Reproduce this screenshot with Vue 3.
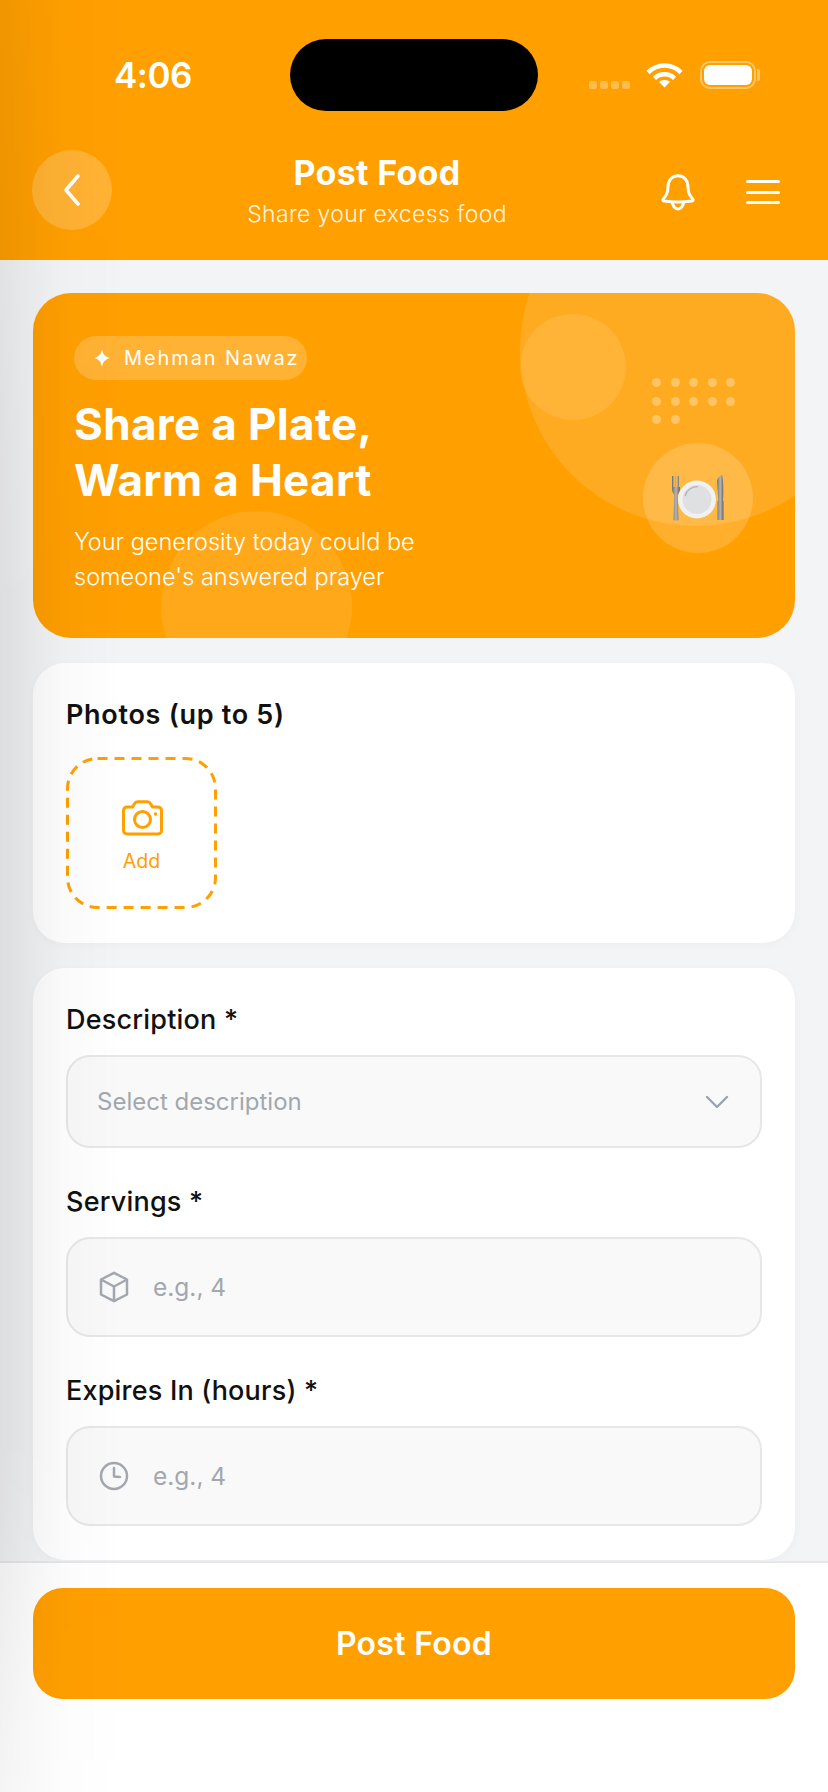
<template>
  <div class="page">
    <header class="header">
      <div class="status">
        <span class="time">4:06</span>
        <div class="island"></div>
        <div class="status-icons">
          <div class="signal">
            <i v-for="n in 4" :key="n"></i>
          </div>
          <svg class="wifi" width="37" height="26" viewBox="0 0 37 26" fill="none" stroke="#fff" stroke-width="4.6">
            <path d="M2 10.5C11.5 1.2 25.5 1.2 35 10.5" />
            <path d="M8.4 16.2c6-5.2 14.2-5.2 20.2 0" />
            <path d="M18.5 25.5l-5.6-5.8c3.2-2.2 8-2.2 11.2 0z" fill="#fff" stroke="none" />
          </svg>
          <div class="battery">
            <div class="battery-fill"></div>
          </div>
        </div>
      </div>
      <div class="nav">
        <button class="back">
          <svg width="20" height="32" viewBox="0 0 20 32" fill="none" stroke="#fff" stroke-width="3.6" stroke-linecap="round" stroke-linejoin="round">
            <path d="M16 2L4 16l12 14" />
          </svg>
        </button>
        <div class="title-block">
          <div class="title">Post Food</div>
          <div class="subtitle">Share your excess food</div>
        </div>
        <div class="nav-actions">
          <svg width="34" height="37" viewBox="0 0 34 37" fill="none" stroke="#fff" stroke-width="3" stroke-linejoin="round">
            <path d="M17 1.8C10.5 1.8 7 7 7 13c0 5-1.4 8.6-4.6 11.8-.9.9-.5 2 .7 2.2 4.6.7 9.2 1 13.9 1s9.3-.3 13.9-1c1.2-.2 1.6-1.3.7-2.2C28.4 21.6 27 18 27 13 27 7 23.5 1.8 17 1.8z" />
            <path d="M11.5 28c0 3.8 2.4 7 5.5 7s5.5-3.2 5.5-7" />
          </svg>
          <div class="menu">
            <i v-for="n in 3" :key="n"></i>
          </div>
        </div>
      </div>
    </header>

    <main class="content">
      <section class="hero">
        <div class="circle circle-big"></div>
        <div class="circle circle-small"></div>
        <div class="circle circle-bottom"></div>
        <div class="circle circle-plate">
          <svg width="52" height="46" viewBox="0 0 52 46">
            <defs>
              <linearGradient id="steel" x1="0" y1="0" x2="1" y2="0">
                <stop offset="0" stop-color="#6f6f6f" />
                <stop offset="0.5" stop-color="#b5b5b5" />
                <stop offset="1" stop-color="#666" />
              </linearGradient>
            </defs>
            <path d="M0 1h1.5v11h1.300V1h1.400v11h1.300V1H7v11h1V14c0 3-1.500 4.500-2.300 5.500L6.500 44c0 1-.5 1.500-1.200 1.500H2.700c-.7 0-1.200-.5-1.200-1.500l.8-24.500C1.500 18.500 0 17 0 14z" fill="url(#steel)" />
            <circle cx="25" cy="24.500" r="19" fill="#f1f1f1" />
            <circle cx="25" cy="24.500" r="14.500" fill="#dfe0e2" />
            <path d="M13 21c1.500-6 7-9.500 13-9.500" fill="none" stroke="#b4b5b8" stroke-width="1.300" />
            <path d="M45.500 45V27c0-.7.3-1.300.8-1.800L45 6C45.500 3 48 .5 50 0c1.500 3 1.500 20 1 25.200.3.500.5 1.100.5 1.800v18z" fill="url(#steel)" />
          </svg>
        </div>
        <div class="dots">
          <i v-for="n in 12" :key="n"></i>
        </div>
        <div class="hero-text">
          <div class="pill">
            <svg width="16" height="18" viewBox="0 0 16 18">
              <path d="M8 0c.8 5 2.800 7.600 8 9-5.200 1.400-7.200 4-8 9-.8-5-2.800-7.600-8-9 5.200-1.400 7.200-4 8-9z" fill="#fff" />
            </svg>
            <span>Mehman Nawaz</span>
          </div>
          <h1>Share a Plate,<br />Warm a Heart</h1>
          <p>Your generosity today could be<br />someone's answered prayer</p>
        </div>
      </section>

      <section class="card photos">
        <div class="photos-label">Photos (up to 5)</div>
        <div class="add-box">
          <svg class="dash" width="151" height="152" viewBox="0 0 151 152" fill="none">
            <rect x="1.5" y="1.5" width="148" height="149" rx="30" stroke="#ff9f00" stroke-width="3" stroke-dasharray="10 7" />
          </svg>
          <svg class="camera" width="41" height="36" viewBox="0 0 41 36" fill="none" stroke="#ff9f00" stroke-width="3" stroke-linejoin="round">
            <path d="M5 7h5.500l2-3.300c.6-1.200 1.500-2 3-2h10c1.500 0 2.400.8 3 2l2 3.300H36c2 0 3.500 1.500 3.500 3.500v20c0 2-1.500 3.500-3.500 3.500H5c-2 0-3.500-1.500-3.500-3.500v-20C1.500 8.500 3 7 5 7z" />
            <circle cx="20.500" cy="19.500" r="8" />
            <circle cx="33.500" cy="14" r="1.700" fill="#ff9f00" stroke="none" />
          </svg>
          <span>Add</span>
        </div>
      </section>

      <section class="card form">
        <label>Description *</label>
        <div class="field select">
          <span>Select description</span>
          <svg width="24" height="14" viewBox="0 0 24 14" fill="none" stroke="#9ca3af" stroke-width="2.4" stroke-linecap="round" stroke-linejoin="round">
            <path d="M2 2l10 10L22 2" />
          </svg>
        </div>

        <label>Servings *</label>
        <div class="field input">
          <svg width="30" height="32" viewBox="0 0 30 32" fill="none" stroke="#a3a7ae" stroke-width="2.5" stroke-linejoin="round">
            <path d="M15 1.800L28 8.500v15L15 30.200 2 23.500v-15z" />
            <path d="M2 8.500L15 15.500l13-7M15 15.500v14.700" />
          </svg>
          <span>e.g., 4</span>
        </div>

        <label>Expires In (hours) *</label>
        <div class="field input">
          <svg width="30" height="32" viewBox="0 0 30 32" fill="none" stroke="#a3a7ae" stroke-width="2.5" stroke-linecap="round" stroke-linejoin="round">
            <circle cx="15" cy="16" r="13" />
            <path d="M15 8v8.500l6 .5" />
          </svg>
          <span>e.g., 4</span>
        </div>
      </section>
    </main>

    <footer class="footer">
      <button class="post-btn">Post Food</button>
    </footer>

    <!-- soft shade along the left edge -->
    <div class="edge-shade"></div>
  </div>
</template>

<script setup>
</script>

<style>
html,
body {
  margin: 0;
  background: #fff;
}
</style>

<style scoped>
.page {
  position: relative;
  display: flex;
  flex-direction: column;
  width: 828px;
  height: 1792px;
  overflow: hidden;
  background: #f3f4f6;
  font-family: Inter, "Noto Sans", sans-serif;
  color: #111;
}

.header {
  flex: none;
  height: 260px;
  box-sizing: border-box;
  padding-top: 39px;
  background: #ff9f00;
  color: #fff;
}

.status {
  display: grid;
  grid-template-columns: 290px 248px 1fr;
  height: 72px;
  align-items: center;
}

.time {
  padding-left: 114px;
  font-size: 35px;
  font-weight: 600;
  letter-spacing: -0.5px;
}

.island {
  height: 72px;
  border-radius: 36px;
  background: #000;
}

.status-icons {
  display: flex;
  align-items: center;
  padding-left: 51px;
}

.signal {
  display: flex;
  gap: 3px;
  margin-top: 20px;
}

.signal i {
  width: 8px;
  height: 8px;
  border-radius: 2px;
  background: rgba(255, 255, 255, 0.3);
}

.wifi {
  margin-left: 16px;
}

.battery {
  position: relative;
  box-sizing: border-box;
  width: 56px;
  height: 28px;
  margin-left: 17px;
  padding: 2px;
  border: 2px solid rgba(255, 255, 255, 0.4);
  border-radius: 10px;
}

.battery::after {
  content: "";
  position: absolute;
  top: 6px;
  right: -6px;
  width: 3px;
  height: 12px;
  border-radius: 0 2px 2px 0;
  background: rgba(255, 255, 255, 0.4);
}

.battery-fill {
  height: 100%;
  border-radius: 6px;
  background: #fff;
}

.nav {
  display: flex;
  align-items: center;
  height: 80px;
  margin-top: 39px;
  padding: 0 48px 0 32px;
}

.back {
  display: flex;
  align-items: center;
  justify-content: center;
  flex: none;
  width: 80px;
  height: 80px;
  padding: 0;
  border: 0;
  border-radius: 50%;
  background: rgba(255, 255, 255, 0.2);
}

.title-block {
  flex: 1;
  text-align: center;
}

.title {
  font-size: 34px;
  font-weight: 700;
  line-height: 42px;
  letter-spacing: 0.3px;
}

.subtitle {
  margin-top: 5px;
  font-size: 23px;
  font-weight: 300;
  line-height: 30px;
  letter-spacing: 0.35px;
  color: rgba(255, 255, 255, 0.9);
}

.nav-actions {
  display: flex;
  align-items: center;
  gap: 51px;
  margin-left: 19px;
  padding-top: 4px;
}

.menu {
  display: flex;
  flex-direction: column;
  gap: 7.5px;
}

.menu i {
  width: 34px;
  height: 3px;
  border-radius: 2px;
  background: #fff;
}

.content {
  flex: 1;
  display: flex;
  flex-direction: column;
  gap: 25px;
  min-height: 0;
  padding: 33px 33px 0;
}

.hero {
  position: relative;
  flex: none;
  height: 345px;
  box-sizing: border-box;
  padding: 43px 41px 0;
  overflow: hidden;
  border-radius: 38px;
  background: #ff9f00;
  color: #fff;
}

.circle {
  position: absolute;
  border-radius: 50%;
}

.circle-big {
  top: -119px;
  left: 487px;
  width: 352px;
  height: 352px;
  background: rgba(255, 255, 255, 0.13);
}

.circle-small {
  top: 21px;
  left: 487px;
  width: 106px;
  height: 106px;
  background: rgba(255, 255, 255, 0.1);
}

.circle-bottom {
  top: 218px;
  left: 128px;
  width: 191px;
  height: 191px;
  background: rgba(255, 255, 255, 0.1);
}

.circle-plate {
  display: flex;
  align-items: center;
  justify-content: center;
  top: 150px;
  left: 610px;
  width: 110px;
  height: 110px;
  background: rgba(255, 255, 255, 0.17);
}

.dots {
  position: absolute;
  top: 85px;
  left: 619px;
  display: grid;
  grid-template-columns: repeat(5, 9px);
  gap: 9.5px;
}

.dots i {
  width: 9px;
  height: 9px;
  border-radius: 50%;
  background: rgba(255, 255, 255, 0.3);
}

.hero-text {
  position: relative;
}

.pill {
  display: inline-flex;
  align-items: center;
  gap: 14px;
  box-sizing: border-box;
  width: 233px;
  height: 44px;
  padding-left: 20px;
  border-radius: 22px;
  background: rgba(255, 255, 255, 0.2);
  font-size: 20px;
  letter-spacing: 1.9px;
  white-space: nowrap;
}

.hero h1 {
  margin: 16px 0 0;
  font-size: 44px;
  font-weight: 700;
  line-height: 56px;
  letter-spacing: 0.35px;
}

.hero p {
  margin: 16px 0 0;
  font-size: 23.5px;
  font-weight: 300;
  line-height: 35px;
  color: #fff;
}

.card {
  flex: none;
  box-sizing: border-box;
  border-radius: 32px;
  background: #fff;
  box-shadow: 0 2px 10px rgba(0, 0, 0, 0.03);
}

.photos {
  height: 280px;
  padding: 35px 33px 0;
}

.photos-label {
  font-size: 27px;
  font-weight: 600;
  line-height: 34px;
  letter-spacing: 0.7px;
}

.add-box {
  position: relative;
  display: flex;
  flex-direction: column;
  align-items: center;
  box-sizing: border-box;
  width: 151px;
  height: 152px;
  margin-top: 25px;
  padding-top: 43px;
  color: #ff9f00;
  font-size: 19.5px;
  font-weight: 400;
}

.dash {
  position: absolute;
  top: 0;
  left: 0;
}

.camera {
  margin-left: 2px;
}

.add-box span {
  margin-top: 13px;
}

.form {
  display: flex;
  flex-direction: column;
  height: 592px;
  padding: 34px 33px;
}

.form label {
  margin-bottom: 19px;
  font-size: 27px;
  font-weight: 500;
  line-height: 36px;
  letter-spacing: 0.2px;
}

.field {
  display: flex;
  align-items: center;
  flex: none;
  box-sizing: border-box;
  border: 2px solid #e6e7e9;
  border-radius: 24px;
  background: #f9f9fa;
  color: #a3a7ae;
}

.form label {
  margin-bottom: 17px;
}

.field + label {
  margin-top: 36px;
}

.select {
  justify-content: space-between;
  height: 93px;
  padding: 0 31px 0 29px;
  font-size: 24px;
}

.input {
  gap: 24px;
  height: 100px;
  padding-left: 31px;
  font-size: 24.5px;
}

.footer {
  flex: none;
  box-sizing: border-box;
  height: 231px;
  padding: 25px 33px 0;
  border-top: 2px solid #e5e7eb;
  background: #fff;
}

.post-btn {
  display: block;
  width: 100%;
  height: 111px;
  border: 0;
  border-radius: 30px;
  background: #ff9f00;
  color: #fff;
  font-family: inherit;
  font-size: 32px;
  font-weight: 600;
  letter-spacing: 0.3px;
}

.edge-shade {
  position: absolute;
  top: 0;
  bottom: 0;
  left: 0;
  width: 125px;
  pointer-events: none;
  background: linear-gradient(90deg, rgba(0, 0, 0, 0.09), rgba(0, 0, 0, 0.05) 25%, rgba(0, 0, 0, 0.02) 50%, transparent);
  -webkit-mask-image: linear-gradient(180deg, rgba(0, 0, 0, 0.6), #000 35%, #000 80%, rgba(0, 0, 0, 0.45));
  mask-image: linear-gradient(180deg, rgba(0, 0, 0, 0.6), #000 35%, #000 80%, rgba(0, 0, 0, 0.45));
}
</style>
